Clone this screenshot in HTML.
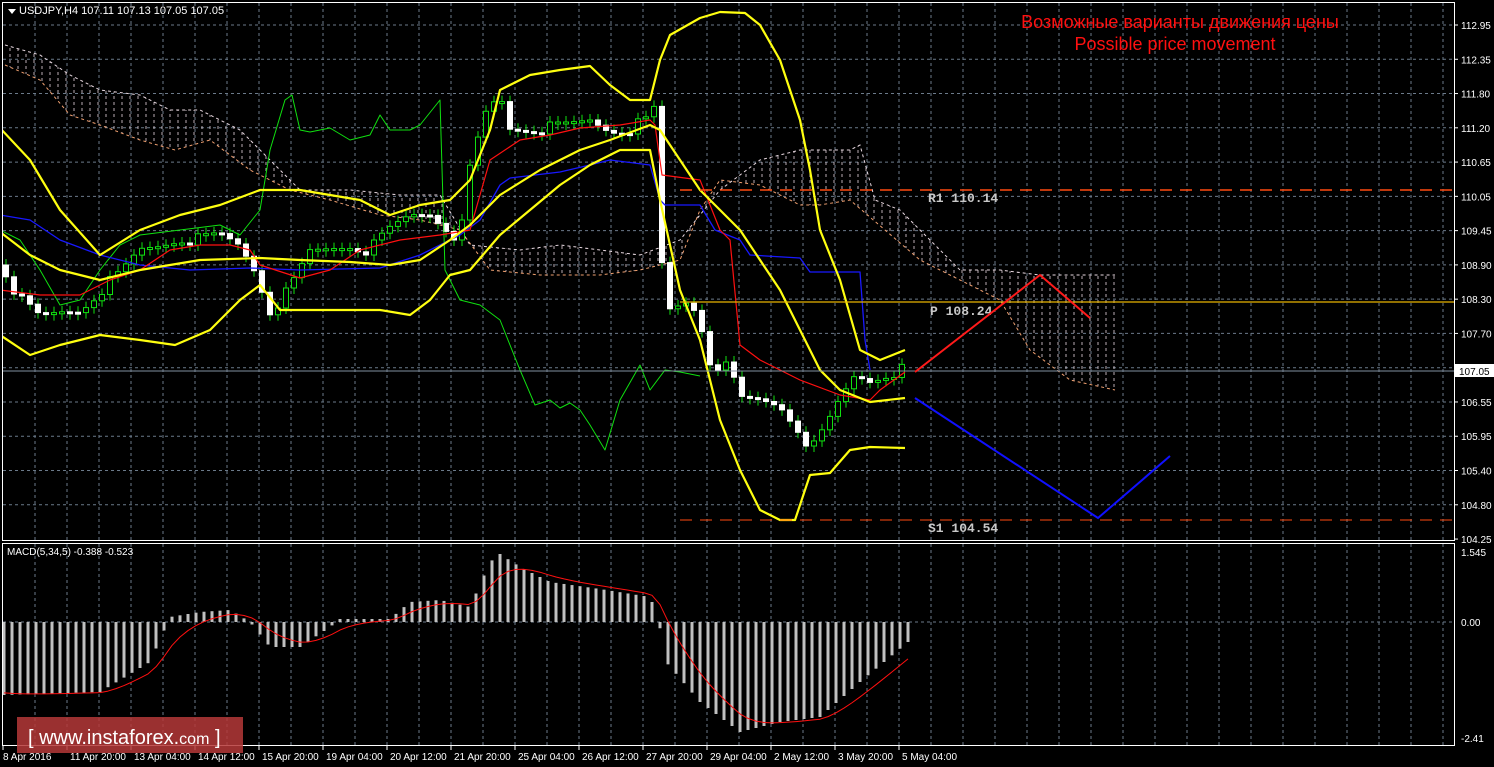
<!DOCTYPE html>
<html><head><meta charset="utf-8">
<style>
html,body{margin:0;padding:0;background:#000;width:1494px;height:767px;overflow:hidden}
svg{display:block}
text{font-family:"Liberation Sans",sans-serif}
</style></head>
<body>
<svg id="s" width="1494" height="767" xmlns="http://www.w3.org/2000/svg">
<defs>
<pattern id="hatch" patternUnits="userSpaceOnUse" width="8" height="6">
<line x1="2" y1="0" x2="2" y2="3" stroke="#e8d8e0" stroke-width="1"/>
</pattern>
<clipPath id="mainclip"><rect x="3" y="3" width="1451" height="537"/></clipPath>
</defs>
<rect width="1494" height="767" fill="#000"/>
<g id="grid" stroke="#6b7a8a" stroke-width="1" stroke-dasharray="3,3"></g>
<g id="cloud" clip-path="url(#mainclip)"></g>
<g id="candles"></g>
<g id="lines" clip-path="url(#mainclip)" fill="none"></g>
<g id="macd"></g>
<line x1="680" y1="190" x2="1454" y2="190" stroke="#ff4a10" stroke-width="1.5" stroke-dasharray="12,8"/>
<line x1="680" y1="302" x2="1454" y2="302" stroke="#e8b400" stroke-width="1.2"/>
<line x1="680" y1="520" x2="1454" y2="520" stroke="#ff4a10" stroke-width="1" stroke-dasharray="12,8"/>
<line x1="3" y1="371" x2="1454" y2="371" stroke="#8090a0" stroke-width="1"/>
<text x="928" y="202" fill="#c8c8c8" font-size="13" font-weight="bold" style="font-family:'Liberation Mono',monospace">R1 110.14</text>
<text x="930" y="315" fill="#c8c8c8" font-size="13" font-weight="bold" style="font-family:'Liberation Mono',monospace">P 108.24</text>
<text x="928" y="532" fill="#c8c8c8" font-size="13" font-weight="bold" style="font-family:'Liberation Mono',monospace">S1 104.54</text>
<polyline points="915,372 1040,275 1090,318" fill="none" stroke="#ff1a1a" stroke-width="2"/>
<polyline points="915,398 1098,518 1170,456" fill="none" stroke="#1010ff" stroke-width="2"/>
<text x="1180" y="28" fill="#ff1010" font-size="18" text-anchor="middle">Возможные варианты движения цены</text>
<text x="1175" y="50" fill="#ff1010" font-size="18" text-anchor="middle">Possible price movement</text>
<rect x="2.5" y="2.5" width="1452" height="538" fill="none" stroke="#fff" stroke-width="1"/>
<rect x="2.5" y="543.5" width="1452" height="202" fill="none" stroke="#fff" stroke-width="1"/>
<path d="M8 9 L16 9 L12 14 Z" fill="#fff"/>
<text x="19" y="14" fill="#fff" font-size="11">USDJPY,H4  107.11 107.13 107.05 107.05</text>
<text x="7" y="555" fill="#fff" font-size="10">MACD(5,34,5) -0.388 -0.523</text>
<g id="axis" fill="#fff" font-size="10"></g>
<rect x="1455" y="364" width="39" height="13" fill="#fff"/>
<text x="1459" y="375" fill="#000" font-size="10">107.05</text>
<rect x="17" y="717" width="226" height="36" fill="#b53838" fill-opacity="0.85"/>
<text x="28" y="744" fill="#fff" font-size="20">[  www.instaforex.<tspan font-size="16">com</tspan> ]</text>
</svg>
<script>
(function(){
var NS="http://www.w3.org/2000/svg";
function el(p,t,a){var e=document.createElementNS(NS,t);for(var k in a)e.setAttribute(k,a[k]);p.appendChild(e);return e}
function interp(pts,x){for(var i=0;i<pts.length-1;i++){if(x>=pts[i][0]&&x<=pts[i+1][0]){var t=(x-pts[i][0])/(pts[i+1][0]-pts[i][0]||1);return pts[i][1]+t*(pts[i+1][1]-pts[i][1])}}return x<pts[0][0]?pts[0][1]:pts[pts.length-1][1]}
function pl(g,pts,c,w){el(g,"polyline",{points:pts.map(function(p){return p.join(",")}).join(" "),stroke:c,"stroke-width":w,fill:"none","stroke-linejoin":"round"})}
var grid=document.getElementById("grid");
for(var x=35;x<1454;x+=32){el(grid,"line",{x1:x,y1:3,x2:x,y2:540});el(grid,"line",{x1:x,y1:544,x2:x,y2:745})}
var labs=["112.95","112.35","111.80","111.20","110.65","110.05","109.45","108.90","108.30","107.70","107.15","106.55","105.95","105.40","104.80","104.25"];
var ax=document.getElementById("axis");
for(var i=0;i<labs.length;i++){var y=25+i*34.27;if(i<15)el(grid,"line",{x1:3,y1:y,x2:1454,y2:y});el(ax,"line",{x1:1454,y1:y,x2:1458,y2:y,stroke:"#fff"});var t=el(ax,"text",{x:1461,y:y+4});t.textContent=labs[i]}
el(grid,"line",{x1:3,y1:622,x2:1454,y2:622});
[["1.545",552],["0.00",622],["-2.41",738]].forEach(function(a){var t=el(ax,"text",{x:1461,y:a[1]+4});t.textContent=a[0]});
var tl=["8 Apr 2016","11 Apr 20:00","13 Apr 04:00","14 Apr 12:00","15 Apr 20:00","19 Apr 04:00","20 Apr 12:00","21 Apr 20:00","25 Apr 04:00","26 Apr 12:00","27 Apr 20:00","29 Apr 04:00","2 May 12:00","3 May 20:00","5 May 04:00"];
for(var i=0;i<tl.length;i++){var x=3+i*64;el(ax,"line",{x1:x,y1:746,x2:x,y2:750,stroke:"#fff"});var t=el(ax,"text",{x:x+(i?3:0),y:760});t.textContent=tl[i]}
var up=[[5,45],[40,55],[70,75],[100,90],[140,95],[170,110],[200,110],[240,130],[270,160],[300,190],[350,190],[400,195],[440,195],[470,245],[520,250],[560,245],[600,250],[640,255],[680,240],[720,190],[760,160],[800,150],[850,150],[860,145],[875,200],[900,210],[930,240],[960,270],[1000,270],[1040,275],[1115,275]];
var lo=[[5,65],[40,80],[70,115],[100,125],[140,140],[175,150],[210,140],[250,170],[290,190],[330,200],[380,215],[420,220],[460,230],[490,270],[540,275],[600,275],[640,270],[680,260],[700,210],[720,180],[760,185],[800,205],[820,205],[850,200],[920,260],[960,280],[1000,300],[1030,350],[1070,380],[1115,390]];
var cl=document.getElementById("cloud");
var poly=up.concat(lo.slice().reverse()).map(function(p){return p.join(",")}).join(" ");
el(cl,"polygon",{points:poly,fill:"url(#hatch)",opacity:"0.8"});
el(cl,"polyline",{points:up.map(function(p){return p.join(",")}).join(" "),fill:"none",stroke:"#e8d8e0","stroke-dasharray":"3,3"});
el(cl,"polyline",{points:lo.map(function(p){return p.join(",")}).join(" "),fill:"none",stroke:"#f0a070","stroke-dasharray":"3,3"});
var path=[[5,270],[20,300],[40,318],[60,312],[80,310],[100,290],[120,275],[140,250],[160,245],[180,238],[200,240],[220,235],[240,245],[255,270],[270,310],[290,290],[310,252],[330,248],[350,245],[370,250],[390,230],[410,215],[430,213],[450,230],[460,240],[470,170],[485,115],[500,95],[510,128],[530,128],[550,128],[570,125],[590,120],[610,130],[630,128],[650,120],[658,100],[662,265],[670,310],[690,300],[700,320],[710,360],[730,370],[740,400],[760,400],[780,405],[800,430],[812,450],[825,430],[840,400],[855,375],[870,380],[890,372],[905,370]];
var C=document.getElementById("candles");var prev=265;
for(var x=6;x<=906;x+=8){var c=interp(path,x)+((x*7)%11-5)*1.2;var o=prev;var ty=Math.min(o,c),by=Math.max(o,c);if(by-ty<2)by=ty+2;
el(C,"line",{x1:x,y1:ty-6,x2:x,y2:by+6,stroke:"#10e010"});
el(C,"rect",{x:x-2.5,y:ty,width:5,height:by-ty,fill:c>o?"#fff":"#000",stroke:c>o?"#fff":"#10e010"});prev=c}
var L=document.getElementById("lines");
pl(L,[[0,230],[20,240],[40,270],[60,305],[80,300],[100,270],[120,245],[140,235],[180,230],[220,225],[240,235],[260,210],[270,150],[285,100],[292,95],[300,130],[310,132],[330,128],[350,140],[370,135],[380,115],[390,130],[410,130],[420,125],[440,100],[445,270],[460,300],[480,305],[500,320],[520,370],[535,405],[550,400],[560,408],[570,403],[580,410],[590,425],[605,450],[620,400],[640,365],[650,390],[665,370],[680,372],[700,376]],"#10e010",1);
pl(L,[[0,215],[30,220],[60,240],[100,255],[140,265],[190,270],[250,268],[300,270],[380,268],[420,255],[460,235],[480,220],[500,185],[510,178],[560,172],[590,165],[610,160],[650,165],[660,200],[665,205],[700,205],[715,230],[740,240],[750,255],[800,258],[810,272],[860,272],[865,340],[870,370]],"#1818ff",1.3);
pl(L,[[0,290],[40,295],[80,295],[110,280],[140,270],[170,250],[200,245],[230,245],[250,250],[260,265],[300,278],[330,270],[360,250],[400,240],[440,235],[470,230],[490,160],[520,140],[550,135],[580,128],[620,125],[650,120],[655,125],[662,175],[700,180],[720,230],[730,240],[740,345],[760,360],[800,380],[840,395],[870,400],[880,390],[905,372]],"#ff1010",1.2);
var Y="#ffff10";
pl(L,[[0,128],[30,160],[60,210],[100,255],[140,230],[180,215],[220,205],[260,190],[300,190],[360,200],[390,215],[420,205],[450,200],[470,180],[490,130],[500,90],[530,75],[560,70],[590,66],[610,85],[630,100],[650,100],[660,60],[670,35],[700,18],[720,12],[745,13],[760,25],[780,60],[800,120],[810,170],[820,230],[840,280],[860,350],[880,360],[905,350]],Y,2.2);
pl(L,[[0,232],[30,255],[60,270],[100,280],[140,270],[200,260],[260,258],[300,260],[350,262],[390,265],[420,260],[450,240],[470,225],[500,195],[540,170],[580,150],[610,140],[650,125],[660,130],[680,160],[700,190],[740,230],[780,290],[820,370],[840,390],[870,402],[905,398]],Y,2.2);
pl(L,[[0,335],[30,355],[60,345],[100,335],[140,340],[175,345],[210,330],[240,300],[260,285],[280,310],[330,310],[380,310],[410,315],[430,300],[450,275],[470,270],[500,235],[530,210],[560,185],[590,165],[620,150],[650,150],[660,200],[680,290],[700,340],[720,420],[740,470],[760,510],[780,520],[795,520],[810,475],[830,473],[850,450],[870,447],[905,448]],Y,2.2);
var mv=[[4,-73],[100,-70],[150,-40],[170,5],[200,10],[230,12],[250,0],[270,-25],[300,-25],[330,-5],[340,3],[390,3],[410,20],[440,22],[470,15],[490,60],[500,68],[520,55],[550,40],[600,33],[650,25],[658,5],[666,-40],[700,-80],[740,-110],[780,-100],[820,-95],[860,-60],[890,-35],[908,-20]];
var M=document.getElementById("macd");var sig=[];var s=-70;
for(var x=4;x<=908;x+=8){var v=interp(mv,x);var h=Math.abs(v);el(M,"rect",{x:x-1.5,y:v>0?622-h:622,width:3,height:h,fill:"#c0c0c0"});s=s+(v-s)*0.28;sig.push([x,622-s])}
pl(M,sig,"#ff1010",1);
})();
</script>
</body></html>
